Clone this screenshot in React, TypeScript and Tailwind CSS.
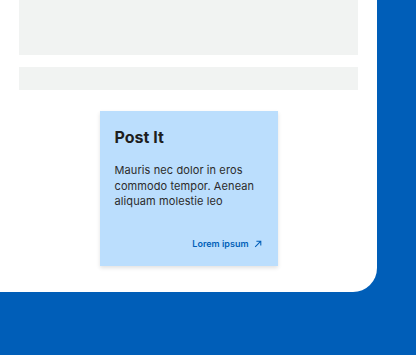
import React from 'react';

export default function App() {
  return (
    <div
      className="w-[416px] h-[355px] bg-[#005eb8] overflow-hidden"
      style={{ fontFamily: 'Inter, "Noto Sans", sans-serif' }}
    >
      <div className="w-[377px] h-[292px] bg-white rounded-br-[24px] flex flex-col items-center">
        <div className="w-[339px] h-[55px] bg-[#f1f3f2]" />
        <div className="w-[339px] h-[23px] mt-[12px] bg-[#f1f3f2]" />
        <div className="w-[178px] h-[155px] mt-[21px] bg-[#bbdefd] shadow-[0_2px_4px_rgba(0,0,0,0.12)] px-[15px] pt-[16px] pb-[15px] flex flex-col">
          <h3 className="text-[16px] leading-[20px] font-bold text-[#1e1e1e]">Post It</h3>
          <p className="mt-[16px] text-[11px] leading-[15.5px] tracking-[0.1px] text-[#2b2b2b]">
            Mauris nec dolor in eros commodo tempor. Aenean aliquam molestie leo
          </p>
          <a className="mt-auto self-end mr-[1px] flex items-center gap-[5px] text-[9px] leading-[14px] font-semibold text-[#005eb8]">
            Lorem ipsum
            <svg width="8" height="8" viewBox="0 0 10 10" fill="none" stroke="currentColor" strokeWidth="1.3">
              <path d="M1.5 8.5 L8.5 1.5 M3 1.5 H8.5 V7" />
            </svg>
          </a>
        </div>
      </div>
    </div>
  );
}
